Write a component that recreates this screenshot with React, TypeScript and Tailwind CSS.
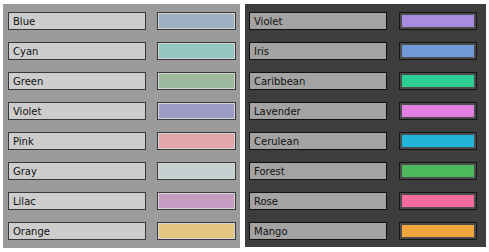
type Swatch = {
    name: string;
    color: string;
};

const light: Swatch[] = [
    { name: 'Blue', color: '#9db1c2' },
    { name: 'Cyan', color: '#95c5c0' },
    { name: 'Green', color: '#9eba9e' },
    { name: 'Violet', color: '#9c9cc6' },
    { name: 'Pink', color: '#e2a5a9' },
    { name: 'Gray', color: '#c5d1d1' },
    { name: 'Lilac', color: '#c59bc1' },
    { name: 'Orange', color: '#e2c57e' },
];

const dark: Swatch[] = [
    { name: 'Violet', color: '#a88ce2' },
    { name: 'Iris', color: '#709bd6' },
    { name: 'Caribbean', color: '#2ecf95' },
    { name: 'Lavender', color: '#e27fe2' },
    { name: 'Cerulean', color: '#22b5d9' },
    { name: 'Forest', color: '#4db95d' },
    { name: 'Rose', color: '#f56b9d' },
    { name: 'Mango', color: '#f1a53d' },
];

export default function App() {
    return (
        <div className="flex h-[252px] w-[489px] gap-[5px] bg-white pl-[3px] pt-[4px] font-['DejaVu_Sans',sans-serif] text-[10px] text-[#111]">
            <div className="flex h-[244px] w-[237px] flex-col gap-[12px] bg-[#9b9b9b] pl-[5px] pt-[8px]">
                {light.map(s => (
                    <div key={s.name} className="flex h-[18px] items-center gap-[11px]">
                        <div className="flex h-full w-[138px] items-center border border-[#383838] bg-[#cdcdcd] pl-[4px]">
                            {s.name}
                        </div>
                        <div
                            className="h-full w-[79px] border border-[#3a3a3a] shadow-[inset_0_0_0_1px_#d6d6d6]"
                            style={{ backgroundColor: s.color }}
                        />
                    </div>
                ))}
            </div>

            <div className="flex h-[243px] w-[241px] flex-col gap-[12px] bg-[#3d3d3d] pl-[4px] pt-[8px]">
                {dark.map(s => (
                    <div key={s.name} className="flex h-[18px] items-center gap-[12px]">
                        <div className="flex h-full w-[138px] items-center border border-[#111] bg-[#a3a3a3] pl-[4px]">
                            {s.name}
                        </div>
                        <div
                            className="h-full w-[78px] border border-[#141414] shadow-[inset_0_0_0_2px_#4c4c4c]"
                            style={{ backgroundColor: s.color }}
                        />
                    </div>
                ))}
            </div>
        </div>
    );
}
